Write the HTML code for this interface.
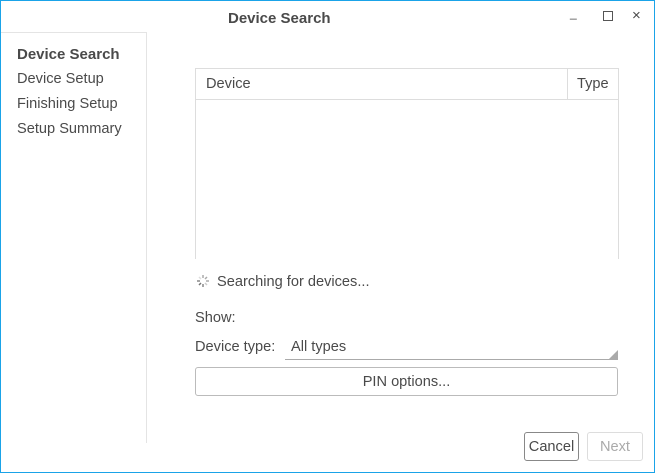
<!DOCTYPE html>
<html><head><style>
body{margin:0;width:655px;height:473px;overflow:hidden;font-family:"Liberation Sans",sans-serif;color:#4a4a4a;font-size:14.6px}
.win{position:absolute;left:0;top:0;width:653px;height:471px;border:1px solid #1aa3e8;background:#fff}
.a{position:absolute;white-space:nowrap}
.side{position:absolute;left:0;top:31px;width:145px;height:410px;border-top:1px solid #e4e4e4;border-right:1px solid #e4e4e4;background:#fff}
.tbl{position:absolute;left:194px;top:67px;width:422px;height:190px;border:1px solid #ddd;border-bottom:none}
.btn{position:absolute;border:1px solid #bbb;border-radius:3px;text-align:center;background:#fff}
</style></head><body><div class="win">
<div class="a" style="left:227px;top:9px;font-weight:bold;font-size:15px">Device Search</div>
<div class="a" style="left:569px;top:5px;font-size:12px">_</div>
<div class="a" style="left:602px;top:10px;width:8px;height:8px;border:1px solid #555"></div>
<div class="a" style="left:631px;top:6px;font-size:15px">×</div>
<div class="side">
<div class="a" style="left:16px;top:13px;font-weight:bold;font-size:15px">Device Search</div>
<div class="a" style="left:16px;top:38px">Device Setup</div>
<div class="a" style="left:16px;top:63px">Finishing Setup</div>
<div class="a" style="left:16px;top:88px">Setup Summary</div>
</div>
<div class="tbl">
<div style="height:30px;border-bottom:1px solid #ddd;position:relative">
<div class="a" style="left:10px;top:7px">Device</div>
<div class="a" style="left:371px;top:0;height:30px;border-left:1px solid #ddd"></div>
<div class="a" style="left:381px;top:7px">Type</div>
</div></div>
<svg class="a" style="left:195px;top:273px" width="14" height="14" viewBox="0 0 14 14"><g stroke="#aaa" stroke-width="1.5"><line x1="7" y1="1" x2="7" y2="4"/><line x1="11" y1="3" x2="9" y2="5"/><line x1="13" y1="7" x2="10" y2="7"/><line x1="3" y1="3" x2="5" y2="5" stroke="#ddd"/><line x1="1" y1="7" x2="4" y2="7" stroke="#888"/><line x1="3" y1="11" x2="5" y2="9" stroke="#777"/><line x1="7" y1="13" x2="7" y2="10" stroke="#888"/><line x1="11" y1="11" x2="9" y2="9" stroke="#ccc"/></g></svg>
<div class="a" style="left:216px;top:273px">Searching for devices...</div>
<div class="a" style="left:194px;top:309px">Show:</div>
<div class="a" style="left:194px;top:338px">Device type:</div>
<div class="a" style="left:290px;top:338px">All types</div>
<div class="a" style="left:284px;top:358px;width:333px;border-bottom:1px solid #aaa"></div>
<svg class="a" style="left:608px;top:349px" width="9" height="9"><polygon points="9,0 9,9 0,9" fill="#aaa"/></svg>
<div class="btn" style="left:194px;top:366px;width:421px;height:27px;line-height:29px">PIN options...</div>
<div class="btn" style="left:523px;top:431px;width:53px;height:27px;line-height:29px;border-color:#888">Cancel</div>
<div class="btn" style="left:586px;top:431px;width:54px;height:27px;line-height:29px;border-color:#ddd;color:#aaa">Next</div>
</div></body></html>
